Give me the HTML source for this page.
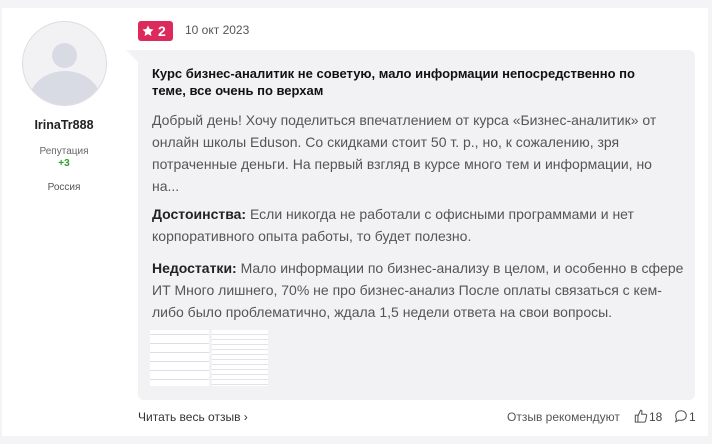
<!DOCTYPE html>
<html><head><meta charset="utf-8"><style>
body{margin:0;width:712px;height:444px;background:#f4f4f6;font-family:"Liberation Sans",sans-serif;position:relative;overflow:hidden}
.card{position:absolute;left:2px;top:8px;width:706px;height:428px;background:#fff}
.av{position:absolute;left:22px;top:21px;width:83px;height:83px;border-radius:50%;background:#f2f2f5;border:1px solid #dcdde3;overflow:hidden}
.av .h{position:absolute;left:29px;top:21px;width:25px;height:25px;border-radius:50%;background:#d8dbe3}
.av .b{position:absolute;left:6px;top:49px;width:72px;height:60px;border-radius:50%;background:#d8dbe3}
.name{position:absolute;left:0;width:128px;top:118px;text-align:center;font-size:12.5px;font-weight:bold;color:#222}
.rep{position:absolute;left:0;width:128px;top:146px;text-align:center;font-size:10px;color:#666;line-height:12px}
.rep b{color:#2ca02c}
.ru{position:absolute;left:0;width:128px;top:182px;text-align:center;font-size:10px;color:#555}
.badge{position:absolute;left:138px;top:21px;width:35px;height:20px;background:#dc2a5c;border-radius:3px;color:#fff;font-weight:bold;font-size:14px}
.date{position:absolute;left:185px;top:23px;font-size:12px;color:#555}
.bub{position:absolute;left:138px;top:50px;width:557px;height:350px;background:#f2f2f5;border-radius:0 6px 6px 6px}
.tri{position:absolute;left:126px;top:50px;width:0;height:0;border-top:12px solid #f2f2f5;border-left:12px solid transparent}
.t{position:absolute;left:152px;top:65px;width:500px;font-size:13px;font-weight:bold;color:#111;line-height:17px}
.p{position:absolute;left:152px;width:540px;font-size:14px;color:#555;line-height:22px}
.p b{color:#222}
.img{position:absolute;top:330px;height:56px;background:#fff}
.f{position:absolute;top:410px;font-size:12px;color:#333}
</style></head><body>
<div class="card"></div>
<div class="av"><div class="h"></div><div class="b"></div></div>
<div class="name">IrinaTr888</div>
<div class="rep">Репутация<br><b>+3</b></div>
<div class="ru">Россия</div>
<div class="badge"><svg style="position:absolute;left:4px;top:4px" width="12" height="12" viewBox="0 0 24 24"><path fill="#fff" d="M12 1l3.4 7 7.6 1-5.5 5.3 1.3 7.6L12 18.3 5.2 21.9l1.3-7.6L1 9l7.6-1z"/></svg><span style="position:absolute;left:20px;top:2px">2</span></div>
<div class="date">10 окт 2023</div>
<div class="tri"></div>
<div class="bub"></div>
<div class="t">Курс бизнес-аналитик не советую, мало информации непосредственно по теме, все очень по верхам</div>
<div class="p" style="top:109px;width:525px">Добрый день! Хочу поделиться впечатлением от курса «Бизнес-аналитик» от онлайн школы Eduson. Со скидками стоит 50 т. р., но, к сожалению, зря потраченные деньги. На первый взгляд в курсе много тем и информации, но на...</div>
<div class="p" style="top:203px"><b>Достоинства:</b> Если никогда не работали с офисными программами и нет корпоративного опыта работы, то будет полезно.</div>
<div class="p" style="top:257px"><b>Недостатки:</b> Мало информации по бизнес-анализу в целом, и особенно в сфере ИТ Много лишнего, 70% не про бизнес-анализ После оплаты связаться с кем-либо было проблематично, ждала 1,5 недели ответа на свои вопросы.</div>
<div class="img" style="left:150px;width:59px;background:repeating-linear-gradient(#fff 0 4px,#dcdde2 4px 5px,#fff 5px 9px)"></div>
<div class="img" style="left:212px;width:56px;background:repeating-linear-gradient(#fff 0 4px,#e2e3e7 4px 5px)"></div>
<div class="f" style="left:138px">Читать весь отзыв ›</div>
<div class="f" style="left:507px;color:#555">Отзыв рекомендуют</div>
<svg style="position:absolute;left:634px;top:409px" width="14" height="14" viewBox="0 0 16 16" fill="none" stroke="#555" stroke-width="1.2"><path d="M1.5 7h3v8h-3zM4.5 8l3-6.5c1.2 0 1.8.8 1.6 2L8.7 6H13c1 0 1.6.9 1.4 1.8l-1.2 5.8c-.2.8-.8 1.4-1.6 1.4H4.5"/></svg>
<div class="f" style="left:649px;color:#444">18</div>
<svg style="position:absolute;left:674px;top:409px" width="14" height="14" viewBox="0 0 16 16" fill="none" stroke="#555" stroke-width="1.2"><path d="M8 2c3.6 0 6 2.3 6 5.5S11.6 13 8 13c-.9 0-1.8-.1-2.6-.4L2 14.5l.9-3C2.3 10.5 2 9.1 2 7.5 2 4.3 4.4 2 8 2z"/></svg>
<div class="f" style="left:689px;color:#444">1</div>
</body></html>
